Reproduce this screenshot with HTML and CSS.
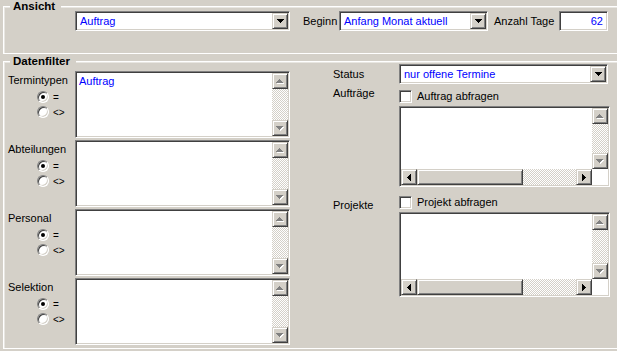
FILE: index.html
```html
<!DOCTYPE html>
<html lang="de">
<head>
    <meta charset="UTF-8">
    <title>Terminliste Filter</title>
    <link rel="stylesheet" href="styles.css">
</head>
<body>
    <!-- Ansicht -->
    <div class="group group-ansicht">
        <span class="group-title">Ansicht</span>
        <div class="ansicht-row">
            <div class="sunken combo combo-view">
                <span class="combo-text">Auftrag</span>
                <span class="btn drop-btn"><svg width="7" height="4" viewBox="0 0 7 4"><path d="M0 0h7v1H0zM1 1h5v1H1zM2 2h3v1H2zM3 3h1v1H3z"/></svg></span>
            </div>
            <span class="lbl lbl-beginn">Beginn</span>
            <div class="sunken combo combo-begin">
                <span class="combo-text">Anfang Monat aktuell</span>
                <span class="btn drop-btn"><svg width="7" height="4" viewBox="0 0 7 4"><path d="M0 0h7v1H0zM1 1h5v1H1zM2 2h3v1H2zM3 3h1v1H3z"/></svg></span>
            </div>
            <span class="lbl lbl-days">Anzahl Tage</span>
            <div class="sunken field-days">62</div>
        </div>
    </div>

    <!-- Datenfilter -->
    <div class="group group-filter">
        <span class="group-title">Datenfilter</span>
        <div class="filter-cols">
            <div class="filter-left">
                <div class="filter-item">
                    <div class="filter-side">
                        <div class="filter-label">Termintypen</div>
                        <div class="radio-row first"><span class="radio on"></span>=</div>
                        <div class="radio-row"><span class="radio"></span>&lt;&gt;</div>
                    </div>
                    <div class="sunken listbox">
                        <div class="list-content"><div class="list-entry">Auftrag</div></div>
                        <div class="vscroll">
                            <span class="btn sbtn"><svg width="8" height="5" viewBox="0 0 8 5"><path fill="#fff" transform="translate(1 1)" d="M3 0h1v1H3zM2 1h3v1H2zM1 2h5v1H1zM0 3h7v1H0z"/><path fill="#808080" d="M3 0h1v1H3zM2 1h3v1H2zM1 2h5v1H1zM0 3h7v1H0z"/></svg></span>
                            <span class="track"></span>
                            <span class="btn sbtn"><svg width="8" height="5" viewBox="0 0 8 5"><path fill="#fff" transform="translate(1 1)" d="M0 0h7v1H0zM1 1h5v1H1zM2 2h3v1H2zM3 3h1v1H3z"/><path fill="#808080" d="M0 0h7v1H0zM1 1h5v1H1zM2 2h3v1H2zM3 3h1v1H3z"/></svg></span>
                        </div>
                    </div>
                </div>

                <div class="filter-item">
                    <div class="filter-side">
                        <div class="filter-label">Abteilungen</div>
                        <div class="radio-row first"><span class="radio on"></span>=</div>
                        <div class="radio-row"><span class="radio"></span>&lt;&gt;</div>
                    </div>
                    <div class="sunken listbox">
                        <div class="list-content"></div>
                        <div class="vscroll">
                            <span class="btn sbtn"><svg width="8" height="5" viewBox="0 0 8 5"><path fill="#fff" transform="translate(1 1)" d="M3 0h1v1H3zM2 1h3v1H2zM1 2h5v1H1zM0 3h7v1H0z"/><path fill="#808080" d="M3 0h1v1H3zM2 1h3v1H2zM1 2h5v1H1zM0 3h7v1H0z"/></svg></span>
                            <span class="track"></span>
                            <span class="btn sbtn"><svg width="8" height="5" viewBox="0 0 8 5"><path fill="#fff" transform="translate(1 1)" d="M0 0h7v1H0zM1 1h5v1H1zM2 2h3v1H2zM3 3h1v1H3z"/><path fill="#808080" d="M0 0h7v1H0zM1 1h5v1H1zM2 2h3v1H2zM3 3h1v1H3z"/></svg></span>
                        </div>
                    </div>
                </div>

                <div class="filter-item">
                    <div class="filter-side">
                        <div class="filter-label">Personal</div>
                        <div class="radio-row first"><span class="radio on"></span>=</div>
                        <div class="radio-row"><span class="radio"></span>&lt;&gt;</div>
                    </div>
                    <div class="sunken listbox">
                        <div class="list-content"></div>
                        <div class="vscroll">
                            <span class="btn sbtn"><svg width="8" height="5" viewBox="0 0 8 5"><path fill="#fff" transform="translate(1 1)" d="M3 0h1v1H3zM2 1h3v1H2zM1 2h5v1H1zM0 3h7v1H0z"/><path fill="#808080" d="M3 0h1v1H3zM2 1h3v1H2zM1 2h5v1H1zM0 3h7v1H0z"/></svg></span>
                            <span class="track"></span>
                            <span class="btn sbtn"><svg width="8" height="5" viewBox="0 0 8 5"><path fill="#fff" transform="translate(1 1)" d="M0 0h7v1H0zM1 1h5v1H1zM2 2h3v1H2zM3 3h1v1H3z"/><path fill="#808080" d="M0 0h7v1H0zM1 1h5v1H1zM2 2h3v1H2zM3 3h1v1H3z"/></svg></span>
                        </div>
                    </div>
                </div>

                <div class="filter-item">
                    <div class="filter-side">
                        <div class="filter-label">Selektion</div>
                        <div class="radio-row first"><span class="radio on"></span>=</div>
                        <div class="radio-row"><span class="radio"></span>&lt;&gt;</div>
                    </div>
                    <div class="sunken listbox">
                        <div class="list-content"></div>
                        <div class="vscroll">
                            <span class="btn sbtn"><svg width="8" height="5" viewBox="0 0 8 5"><path fill="#fff" transform="translate(1 1)" d="M3 0h1v1H3zM2 1h3v1H2zM1 2h5v1H1zM0 3h7v1H0z"/><path fill="#808080" d="M3 0h1v1H3zM2 1h3v1H2zM1 2h5v1H1zM0 3h7v1H0z"/></svg></span>
                            <span class="track"></span>
                            <span class="btn sbtn"><svg width="8" height="5" viewBox="0 0 8 5"><path fill="#fff" transform="translate(1 1)" d="M0 0h7v1H0zM1 1h5v1H1zM2 2h3v1H2zM3 3h1v1H3z"/><path fill="#808080" d="M0 0h7v1H0zM1 1h5v1H1zM2 2h3v1H2zM3 3h1v1H3z"/></svg></span>
                        </div>
                    </div>
                </div>
            </div>

            <div class="filter-right">
                <span class="lbl row-status">Status</span>
                <div class="sunken combo combo-status">
                    <span class="combo-text">nur offene Termine</span>
                    <span class="btn drop-btn"><svg width="7" height="4" viewBox="0 0 7 4"><path d="M0 0h7v1H0zM1 1h5v1H1zM2 2h3v1H2zM3 3h1v1H3z"/></svg></span>
                </div>

                <span class="lbl lbl-auftraege">Aufträge</span>
                <div class="check-row check-auftraege"><span class="sunken checkbox"></span>Auftrag abfragen</div>

                <div class="sunken listbox listbox-wide list-auftraege">
                    <div class="list-content"></div>
                    <div class="vscroll">
                        <span class="btn sbtn"><svg width="8" height="5" viewBox="0 0 8 5"><path fill="#fff" transform="translate(1 1)" d="M3 0h1v1H3zM2 1h3v1H2zM1 2h5v1H1zM0 3h7v1H0z"/><path fill="#808080" d="M3 0h1v1H3zM2 1h3v1H2zM1 2h5v1H1zM0 3h7v1H0z"/></svg></span>
                        <span class="track"></span>
                        <span class="btn sbtn"><svg width="8" height="5" viewBox="0 0 8 5"><path fill="#fff" transform="translate(1 1)" d="M0 0h7v1H0zM1 1h5v1H1zM2 2h3v1H2zM3 3h1v1H3z"/><path fill="#808080" d="M0 0h7v1H0zM1 1h5v1H1zM2 2h3v1H2zM3 3h1v1H3z"/></svg></span>
                    </div>
                    <div class="hscroll">
                        <span class="btn sbtn"><svg width="4" height="7" viewBox="0 0 4 7"><path d="M3 0h1v7H3zM2 1h1v5H2zM1 2h1v3H1zM0 3h1v1H0z"/></svg></span>
                        <span class="btn thumb"></span>
                        <span class="track"></span>
                        <span class="btn sbtn"><svg width="4" height="7" viewBox="0 0 4 7"><path d="M0 0h1v7H0zM1 1h1v5H1zM2 2h1v3H2zM3 3h1v1H3z"/></svg></span>
                    </div>
                    <div class="corner"></div>
                </div>

                <span class="lbl lbl-projekte">Projekte</span>
                <div class="check-row check-projekte"><span class="sunken checkbox"></span>Projekt abfragen</div>

                <div class="sunken listbox listbox-wide list-projekte">
                    <div class="list-content"></div>
                    <div class="vscroll">
                        <span class="btn sbtn"><svg width="8" height="5" viewBox="0 0 8 5"><path fill="#fff" transform="translate(1 1)" d="M3 0h1v1H3zM2 1h3v1H2zM1 2h5v1H1zM0 3h7v1H0z"/><path fill="#808080" d="M3 0h1v1H3zM2 1h3v1H2zM1 2h5v1H1zM0 3h7v1H0z"/></svg></span>
                        <span class="track"></span>
                        <span class="btn sbtn"><svg width="8" height="5" viewBox="0 0 8 5"><path fill="#fff" transform="translate(1 1)" d="M0 0h7v1H0zM1 1h5v1H1zM2 2h3v1H2zM3 3h1v1H3z"/><path fill="#808080" d="M0 0h7v1H0zM1 1h5v1H1zM2 2h3v1H2zM3 3h1v1H3z"/></svg></span>
                    </div>
                    <div class="hscroll">
                        <span class="btn sbtn"><svg width="4" height="7" viewBox="0 0 4 7"><path d="M3 0h1v7H3zM2 1h1v5H2zM1 2h1v3H1zM0 3h1v1H0z"/></svg></span>
                        <span class="btn thumb"></span>
                        <span class="track"></span>
                        <span class="btn sbtn"><svg width="4" height="7" viewBox="0 0 4 7"><path d="M0 0h1v7H0zM1 1h1v5H1zM2 2h1v3H2zM3 3h1v1H3z"/></svg></span>
                    </div>
                    <div class="corner"></div>
                </div>
            </div>
        </div>
    </div>
</body>
</html>
```

FILE: styles.css
```css
/* Base */
* {
    box-sizing: border-box;
}

body {
    margin: 0;
    width: 617px;
    height: 351px;
    overflow: hidden;
    background: #d4d0c8;
    color: #000;
    font-family: "Liberation Sans", Arial, sans-serif;
    font-size: 11px;
    line-height: 13px;
}

svg {
    display: block;
    shape-rendering: crispEdges;
}

/* Group boxes */
.group {
    position: relative;
    margin-left: 3px;
    width: 640px;
    border: 1px solid #fff;
    box-shadow: inset 1px 1px 0 #e8e6e1;
}

.group-title {
    position: absolute;
    top: -7px;
    left: 6px;
    padding: 0 6px 0 3px;
    background: #d4d0c8;
    font-size: 11.5px;
    font-weight: bold;
    line-height: 13px;
}

.group-ansicht {
    margin-top: 6px;
    height: 48px;
    padding: 4px 0 0 71px;
}

.group-filter {
    margin-top: 7px;
    height: 288px;
}

/* 3D borders */
.sunken {
    border: 1px solid;
    border-color: #808080 #fff #fff #808080;
    box-shadow: inset 1px 1px 0 #404040, inset -1px -1px 0 #d4d0c8;
    padding: 1px;
    background: #fff;
}

.btn {
    display: flex;
    align-items: center;
    justify-content: center;
    flex: none;
    background: #d4d0c8;
    border: 1px solid;
    border-color: #d4d0c8 #404040 #404040 #d4d0c8;
    box-shadow: inset 1px 1px 0 #fff, inset -1px -1px 0 #808080;
}

/* Ansicht row */
.ansicht-row {
    display: flex;
    align-items: center;
    height: 20px;
}

.combo {
    display: flex;
    height: 20px;
}

.combo-text {
    flex: 1;
    padding-left: 3px;
    color: #00f;
    line-height: 16px;
    white-space: nowrap;
    overflow: hidden;
}

.drop-btn {
    width: 16px;
    height: 16px;
}

.combo-view {
    width: 215px;
}

.lbl-beginn {
    width: 36px;
    margin-left: 13px;
}

.combo-begin {
    width: 149px;
}

.lbl-days {
    width: 65px;
    margin-left: 6px;
}

.field-days {
    width: 49px;
    height: 20px;
    padding-right: 4px;
    text-align: right;
    color: #00f;
    line-height: 16px;
}

/* Datenfilter */
.filter-cols {
    display: flex;
}

.filter-left {
    display: flex;
    flex-direction: column;
    gap: 2px;
    padding-top: 9px;
}

.filter-item {
    display: flex;
    height: 67px;
}

.filter-side {
    width: 71px;
}

.filter-label {
    padding: 3px 0 0 4px;
}

.radio-row {
    display: flex;
    align-items: center;
    gap: 4px;
    height: 12px;
    margin: 3px 0 0 33px;
    font-size: 10px;
}

.radio-row.first {
    margin-top: 4px;
}

.radio {
    position: relative;
    width: 12px;
    height: 12px;
    border-radius: 50%;
    border: 1px solid;
    border-color: #808080 #fff #fff #808080;
    box-shadow: inset 1px 1px 0 #404040, inset -1px -1px 0 #d4d0c8;
    background: #fff;
}

.radio.on::after {
    content: "";
    position: absolute;
    left: 3px;
    top: 3px;
    width: 4px;
    height: 4px;
    border-radius: 50%;
    background: #000;
}

/* List boxes */
.listbox {
    display: grid;
    grid-template-columns: 1fr 16px;
    width: 215px;
    height: 67px;
}

.list-entry {
    padding: 2px 0 0 2px;
    color: #00f;
}

.vscroll {
    display: flex;
    flex-direction: column;
}

.hscroll {
    display: flex;
}

.sbtn {
    width: 16px;
    height: 16px;
}

.track {
    flex: 1;
    background-color: #fff;
    background-image: conic-gradient(#d4d0c8 25%, #fff 0 50%, #d4d0c8 0 75%, #fff 0);
    background-size: 2px 2px;
}

.thumb {
    width: 106px;
    height: 16px;
}

.corner {
    background: #fff;
}

.listbox-wide {
    grid-template-columns: 1fr 16px;
    grid-template-rows: 1fr 16px;
    width: 211px;
    grid-column: 2;
}

.list-auftraege {
    height: 81px;
    margin-top: 3px;
}

.list-projekte {
    height: 85px;
}

/* Right column */
.filter-right {
    display: grid;
    grid-template-columns: 66px 211px;
    align-content: start;
    padding: 2px 0 0 43px;
}

.row-status {
    align-self: center;
}

.combo-status {
    width: 209px;
}

.lbl-auftraege {
    margin-top: 3px;
}

.lbl-projekte {
    margin-top: 12px;
}

.check-row {
    display: flex;
    align-items: center;
    gap: 5px;
    height: 13px;
}

.check-auftraege {
    margin-top: 6px;
}

.check-projekte {
    margin-top: 9px;
}

.checkbox {
    width: 13px;
    height: 13px;
}
```
